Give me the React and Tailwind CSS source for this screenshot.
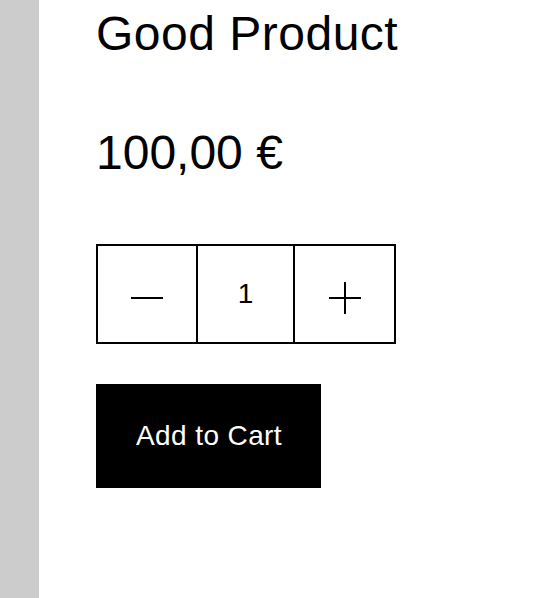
import { useState } from "react";

export default function App() {
  const [qty, setQty] = useState(1);

  return (
    <div className="flex min-h-screen bg-white text-black font-['Liberation_Sans',Arial,sans-serif]">
      <aside className="w-[39px] shrink-0 bg-[#cccccc]" />

      <main className="pl-[57px]">
        <h1 className="mt-[6px] text-[48px] leading-[56px] font-normal tracking-[0.5px]">Good Product</h1>

        <p className="mt-[63px] text-[48px] leading-[56px]">100,00 €</p>

        {/* Mengen-Auswahl */}
        <div className="mt-[63px] flex h-[100px] w-[300px] border-2 border-black">
          <button
            onClick={() => setQty(Math.max(1, qty - 1))}
            className="flex w-[98px] items-center justify-center"
            aria-label="Menge verringern"
          >
            <svg width="32" height="32" viewBox="0 0 32 32" className="mt-[7px]">
              <line x1="0" y1="16" x2="32" y2="16" stroke="black" strokeWidth="2" />
            </svg>
          </button>
          <input
            readOnly
            value={qty}
            className="w-[99px] border-x-2 border-black bg-transparent text-center text-[28px] outline-none"
          />
          <button
            onClick={() => setQty(qty + 1)}
            className="flex flex-1 items-center justify-center"
            aria-label="Menge erhöhen"
          >
            <svg width="32" height="32" viewBox="0 0 32 32" className="mt-[7px]">
              <line x1="0" y1="16" x2="32" y2="16" stroke="black" strokeWidth="2" />
              <line x1="16" y1="0" x2="16" y2="32" stroke="black" strokeWidth="2" />
            </svg>
          </button>
        </div>

        <button className="mt-[40px] block h-[104px] w-[225px] bg-black pl-[40px] text-left text-[28px] tracking-[0.4px] text-white">
          Add to Cart
        </button>
      </main>
    </div>
  );
}
